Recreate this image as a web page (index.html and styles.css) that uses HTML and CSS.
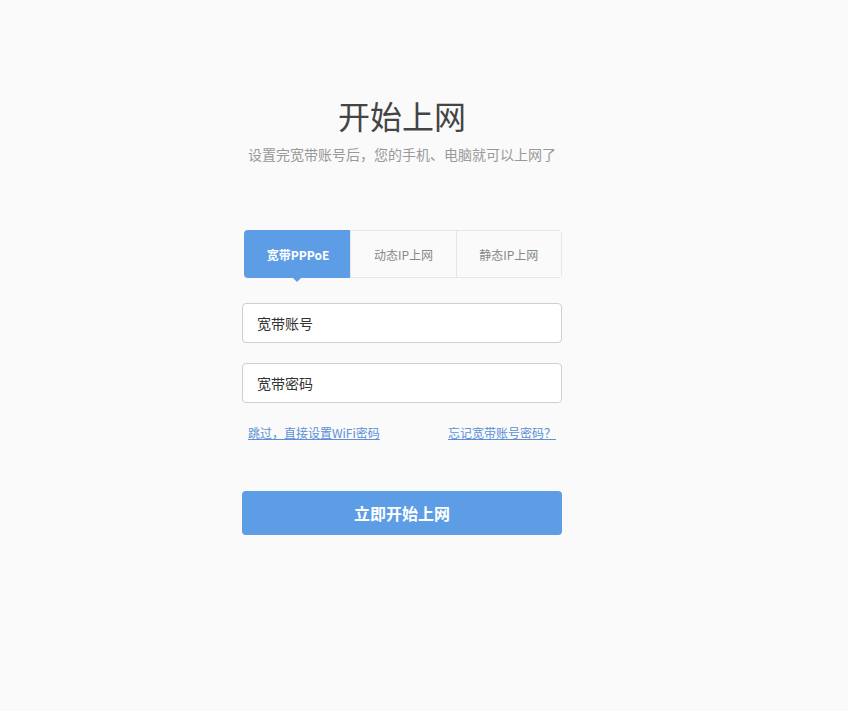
FILE: index.html
```html
<!DOCTYPE html>
<html>

<head>
    <meta charset="utf-8">
    <title>开始上网</title>
    <link rel="stylesheet" href="styles.css">
</head>

<body>
    <div class="wizard">
        <h1 class="title">开始上网</h1>
        <p class="subtitle">设置完宽带账号后，您的手机、电脑就可以上网了</p>

        <div class="tabs">
            <div class="tab active">宽带PPPoE</div>
            <div class="tab">动态IP上网</div>
            <div class="tab">静态IP上网</div>
        </div>

        <div class="field"><input type="text" placeholder="宽带账号"></div>
        <div class="field"><input type="password" placeholder="宽带密码"></div>

        <div class="links">
            <a href="#">跳过，直接设置WiFi密码</a>
            <a href="#">忘记宽带账号密码？</a>
        </div>

        <button class="submit">立即开始上网</button>
    </div>
</body>

</html>
```

FILE: styles.css
```css
body {
    margin: 0;
    background-color: #fafafa;
    font-family: "Noto Sans CJK SC", "Liberation Sans", sans-serif;
}

.wizard {
    width: 320px;
    margin-left: 242px;
    padding-top: 92px;
}

.title {
    margin: 0;
    text-align: center;
    font-size: 32px;
    font-weight: normal;
    line-height: 46px;
    color: #444;
}

.subtitle {
    margin: 6px 0 0;
    text-align: center;
    font-size: 14px;
    line-height: 20px;
    color: #999;
}

.tabs {
    display: flex;
    margin: 66px 0 0 2px;
    height: 48px;
    border: 1px solid #e6e6e6;
    border-radius: 4px;
    box-sizing: border-box;
}

.tab {
    flex: 1;
    display: flex;
    align-items: center;
    justify-content: center;
    font-size: 12px;
    color: #888;
    background-color: #fafafa;
    border-left: 1px solid #e6e6e6;
}

.tab:first-child {
    border-left: none;
}

.tab.active {
    position: relative;
    margin: -1px 0 -1px -1px;
    padding-left: 2px;
    background-color: #5c9de6;
    color: #fff;
    font-weight: bold;
    border-radius: 4px 0 0 4px;
}

.tab.active::after {
    content: "";
    position: absolute;
    left: 49px;
    bottom: -4px;
    border-left: 4px solid transparent;
    border-right: 4px solid transparent;
    border-top: 4px solid #5c9de6;
}

.field {
    margin-top: 20px;
}

.tabs + .field {
    margin-top: 25px;
}

.field input {
    width: 100%;
    height: 40px;
    box-sizing: border-box;
    padding: 0 14px;
    border: 1px solid #cfcfcf;
    border-radius: 4px;
    background: #fff;
    font-family: inherit;
    font-size: 14px;
    color: #333;
    outline: none;
}

.field input::placeholder {
    color: #333;
}

.links {
    display: flex;
    justify-content: space-between;
    margin-top: 21px;
    padding: 0 6px;
}

.links a {
    font-size: 12px;
    line-height: 18px;
    color: #5b8fd6;
}

.submit {
    display: block;
    width: 100%;
    height: 44px;
    margin-top: 49px;
    border: none;
    border-radius: 4px;
    background-color: #5c9de6;
    color: #fff;
    font-family: inherit;
    font-size: 16px;
    font-weight: bold;
    cursor: pointer;
}
```
